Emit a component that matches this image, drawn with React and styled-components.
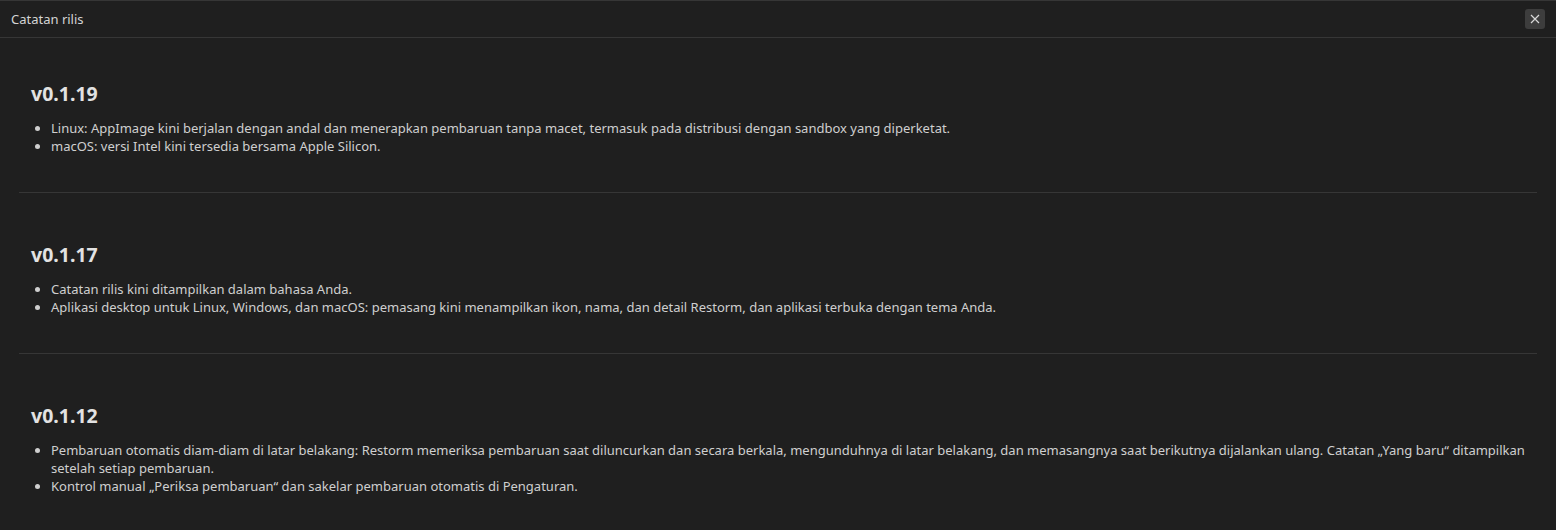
import React from "react";
import styled, { createGlobalStyle } from "styled-components";

const GlobalStyle = createGlobalStyle`
  html, body {
    margin: 0;
    padding: 0;
    background: #1f1f1f;
  }
  body {
    font-family: "Noto Sans", "Open Sans", sans-serif;
    color: #cccccc;
  }
`;

const releases = [
  {
    version: "v0.1.19",
    notes: [
      "Linux: AppImage kini berjalan dengan andal dan menerapkan pembaruan tanpa macet, termasuk pada distribusi dengan sandbox yang diperketat.",
      "macOS: versi Intel kini tersedia bersama Apple Silicon.",
    ],
  },
  {
    version: "v0.1.17",
    notes: [
      "Catatan rilis kini ditampilkan dalam bahasa Anda.",
      "Aplikasi desktop untuk Linux, Windows, dan macOS: pemasang kini menampilkan ikon, nama, dan detail Restorm, dan aplikasi terbuka dengan tema Anda.",
    ],
  },
  {
    version: "v0.1.12",
    notes: [
      "Pembaruan otomatis diam-diam di latar belakang: Restorm memeriksa pembaruan saat diluncurkan dan secara berkala, mengunduhnya di latar belakang, dan memasangnya saat berikutnya dijalankan ulang. Catatan \u201EYang baru\u201C ditampilkan setelah setiap pembaruan.",
      "Kontrol manual \u201EPeriksa pembaruan\u201C dan sakelar pembaruan otomatis di Pengaturan.",
    ],
  },
];

const Panel = styled.div`
  height: 530px;
  overflow: hidden;
  border-top: 1px solid #363636;
  box-sizing: border-box;
`;

const Header = styled.div`
  height: 36px;
  display: flex;
  align-items: center;
  justify-content: space-between;
  padding: 0 11px;
  border-bottom: 1px solid #363636;
`;

const Title = styled.div`
  font-size: 13px;
  color: #d4d4d4;
`;

const CloseButton = styled.button`
  width: 20px;
  height: 20px;
  border: none;
  border-radius: 3px;
  background: #3d3d3d;
  display: flex;
  align-items: center;
  justify-content: center;
  padding: 0;
  cursor: pointer;
`;

const Body = styled.div`
  padding: 0 19px;
`;

const Section = styled.section`
  padding: 44px 12px 37px;
  border-bottom: ${(p) => (p.last ? "none" : "1px solid #363636")};
  & + & {
    padding-top: 50px;
  }
`;

const Version = styled.h2`
  margin: 0 0 13px;
  font-size: 19.5px;
  line-height: 24px;
  font-weight: 700;
  color: #e2e2e2;
`;

const Notes = styled.ul`
  margin: 0;
  padding-left: 20px;
  font-size: 13px;
  line-height: 18px;
  color: #cfcfcf;
`;

export default function App() {
  return (
    <>
      <GlobalStyle />
      <Panel>
        <Header>
          <Title>Catatan rilis</Title>
          <CloseButton aria-label="Tutup">
            <svg width="10" height="10" viewBox="0 0 10 10">
              <path d="M1 1L9 9M9 1L1 9" stroke="#d8d8d8" strokeWidth="1.2" />
            </svg>
          </CloseButton>
        </Header>
        <Body>
          {releases.map((r, i) => (
            <Section key={r.version} last={i === releases.length - 1}>
              <Version>{r.version}</Version>
              <Notes>
                {r.notes.map((n) => (
                  <li key={n}>{n}</li>
                ))}
              </Notes>
            </Section>
          ))}
        </Body>
      </Panel>
    </>
  );
}
